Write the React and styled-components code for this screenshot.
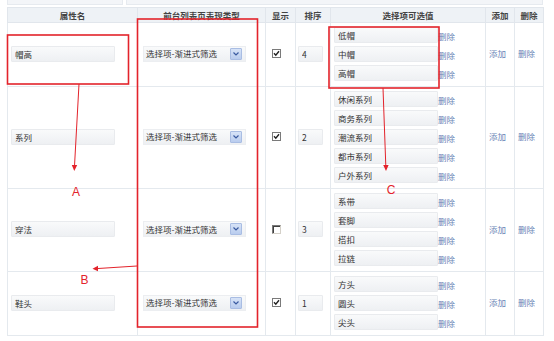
import React from 'react';
import styled, { createGlobalStyle } from 'styled-components';

const GlobalStyle = createGlobalStyle`
  body {
    margin: 0;
    background: #fff;
    font-family: "Noto Sans CJK SC", "Liberation Sans", sans-serif;
  }
`;

// 页面容器
const Page = styled.div`
  position: relative;
  width: 554px;
  height: 341px;
  overflow: hidden;
  background: #fff;
`;

const TopStrip = styled.div`
  display: flex;
  gap: 3px;
  height: 5px;
  padding: 0 11px 0 7px;
`;

const StripBox = styled.div`
  width: ${(p) => p.$w || 'auto'};
  flex: ${(p) => (p.$w ? 'none' : '1')};
  background: #f3f5f8;
  border: 1px solid #e6eaef;
  border-top: none;
`;

// 表格样式
const Table = styled.table`
  margin: 2px 0 0 7px;
  width: 536px;
  table-layout: fixed;
  border-collapse: collapse;
  border: 1px solid #dfe5eb;
  font-size: 8.5px;
  line-height: 1.2;
  color: #333;
`;

const Th = styled.th`
  padding: 0;
  line-height: 14px;
  background: #eef2f6;
  border: 1px solid #e1e6ec;
  font-weight: bold;
  color: #444;
  text-align: center;
`;

const Td = styled.td`
  padding: 2px 0 4px ${(p) => p.$pl || 0}px;
  border: 1px solid #e4e9ee;
  vertical-align: middle;
  text-align: left;
`;

const TextInput = styled.input`
  box-sizing: border-box;
  display: block;
  width: ${(p) => p.$w}px;
  height: 16px;
  padding: 0 3px;
  border: 1px solid #e9ebee;
  border-radius: 1px;
  background: linear-gradient(to bottom, #f9fafb, #eef0f3);
  font: inherit;
  color: #333;
  outline: none;
`;

const SelectBox = styled.div`
  box-sizing: border-box;
  display: flex;
  align-items: center;
  justify-content: space-between;
  width: 103px;
  height: 16px;
  padding: 0 3px 0 2px;
  background: linear-gradient(to bottom, #f9fafb, #eef0f3);
  border: 1px solid #eceef1;
`;

const SelectArrow = styled.span`
  display: flex;
  align-items: center;
  justify-content: center;
  width: 10px;
  height: 10px;
  background: linear-gradient(to bottom, #d7e3f7, #b9ccee);
  border: 1px solid #a9bde3;
  border-radius: 1px;
`;

const Check = styled.span`
  box-sizing: border-box;
  display: flex;
  align-items: center;
  justify-content: center;
  width: 9px;
  height: 9px;
  background: #fff;
  border: 1px solid #7a7a7a;
  border-right-color: ${(p) => (p.$on ? '#7a7a7a' : '#d4d0c8')};
  border-bottom-color: ${(p) => (p.$on ? '#7a7a7a' : '#d4d0c8')};
  box-shadow: ${(p) => (p.$on ? 'none' : 'inset 1px 1px 0 #404040')};
`;

const OptionList = styled.div`
  display: flex;
  flex-direction: column;
`;

const OptionLine = styled.div`
  display: flex;
  align-items: center;
  height: 19px;
`;

const Link = styled.a`
  color: #6a85b6;
  text-decoration: none;
  font-size: 8.5px;
  margin-top: ${(p) => p.$mt || 0}px;
  cursor: pointer;
`;

// 红色标注层
const Marks = styled.svg`
  position: absolute;
  left: 0;
  top: 0;
  pointer-events: none;
`;

const rows = [
  { name: '帽高', show: true, sort: '4', options: ['低帽', '中帽', '高帽'] },
  { name: '系列', show: true, sort: '2', options: ['休闲系列', '商务系列', '潮流系列', '都市系列', '户外系列'] },
  { name: '穿法', show: false, sort: '3', options: ['系带', '套脚', '搭扣', '拉链'] },
  { name: '鞋头', show: true, sort: '1', options: ['方头', '圆头', '尖头'] },
];

const red = '#e3232b';

const App = () => {
  return (
    <Page>
      <GlobalStyle />
      <TopStrip>
        <StripBox $w="114px" />
        <StripBox />
      </TopStrip>

      <Table>
        <colgroup>
          <col style={{ width: 130 }} />
          <col style={{ width: 128 }} />
          <col style={{ width: 30 }} />
          <col style={{ width: 35 }} />
          <col style={{ width: 155 }} />
          <col style={{ width: 29 }} />
          <col style={{ width: 29 }} />
        </colgroup>
        <thead>
          <tr>
            <Th>属性名</Th>
            <Th>前台列表页表现类型</Th>
            <Th>显示</Th>
            <Th>排序</Th>
            <Th>选择项可选值</Th>
            <Th>添加</Th>
            <Th>删除</Th>
          </tr>
        </thead>
        <tbody>
          {rows.map((r) => (
            <tr key={r.name}>
              <Td $pl={3}>
                <TextInput $w={104} defaultValue={r.name} readOnly />
              </Td>
              <Td $pl={5}>
                <SelectBox>
                  <span>选择项-渐进式筛选</span>
                  <SelectArrow>
                    <svg width="6" height="4" viewBox="0 0 6 4">
                      <path d="M0.5 0.5 L3 3 L5.5 0.5" fill="none" stroke="#3a5aa0" strokeWidth="1.2" />
                    </svg>
                  </SelectArrow>
                </SelectBox>
              </Td>
              <Td $pl={6}>
                <Check $on={r.show}>
                  {r.show && (
                    <svg width="7" height="7" viewBox="0 0 7 7">
                      <path d="M1 3.2 L2.8 5.2 L6 1.2" fill="none" stroke="#222" strokeWidth="1.4" />
                    </svg>
                  )}
                </Check>
              </Td>
              <Td $pl={2}>
                <TextInput $w={25} defaultValue={r.sort} readOnly />
              </Td>
              <Td $pl={3}>
                <OptionList>
                  {r.options.map((o) => (
                    <OptionLine key={o}>
                      <TextInput $w={104} defaultValue={o} readOnly />
                      <Link $mt={4}>删除</Link>
                    </OptionLine>
                  ))}
                </OptionList>
              </Td>
              <Td $pl={3}>
                <Link>添加</Link>
              </Td>
              <Td $pl={3}>
                <Link>删除</Link>
              </Td>
            </tr>
          ))}
        </tbody>
      </Table>

      <Marks width="554" height="341" viewBox="0 0 554 341">
        <g fill="none" stroke={red} strokeWidth="1.6">
          <rect x="7.5" y="35" width="121" height="49" />
          <rect x="137.5" y="19" width="120" height="308" />
          <rect x="329" y="27" width="110" height="61" />
          <line x1="79" y1="84" x2="74.5" y2="166" strokeWidth="1" />
          <line x1="137" y1="266" x2="98" y2="268.5" strokeWidth="1" />
          <line x1="383" y1="88" x2="385.8" y2="166" strokeWidth="1" />
        </g>
        <g fill={red}>
          <path d="M71.8 165 L77.2 165 L74.3 171 Z" />
          <path d="M98 265.8 L98 271.2 L92.5 268.7 Z" />
          <path d="M383.2 165 L388.6 165 L386 171 Z" />
        </g>
        <g fill={red} fontFamily="Liberation Sans, sans-serif" fontSize="12" textAnchor="middle">
          <text x="76" y="196">A</text>
          <text x="84.5" y="284">B</text>
          <text x="391" y="194">C</text>
        </g>
      </Marks>
    </Page>
  );
};

export default App;
